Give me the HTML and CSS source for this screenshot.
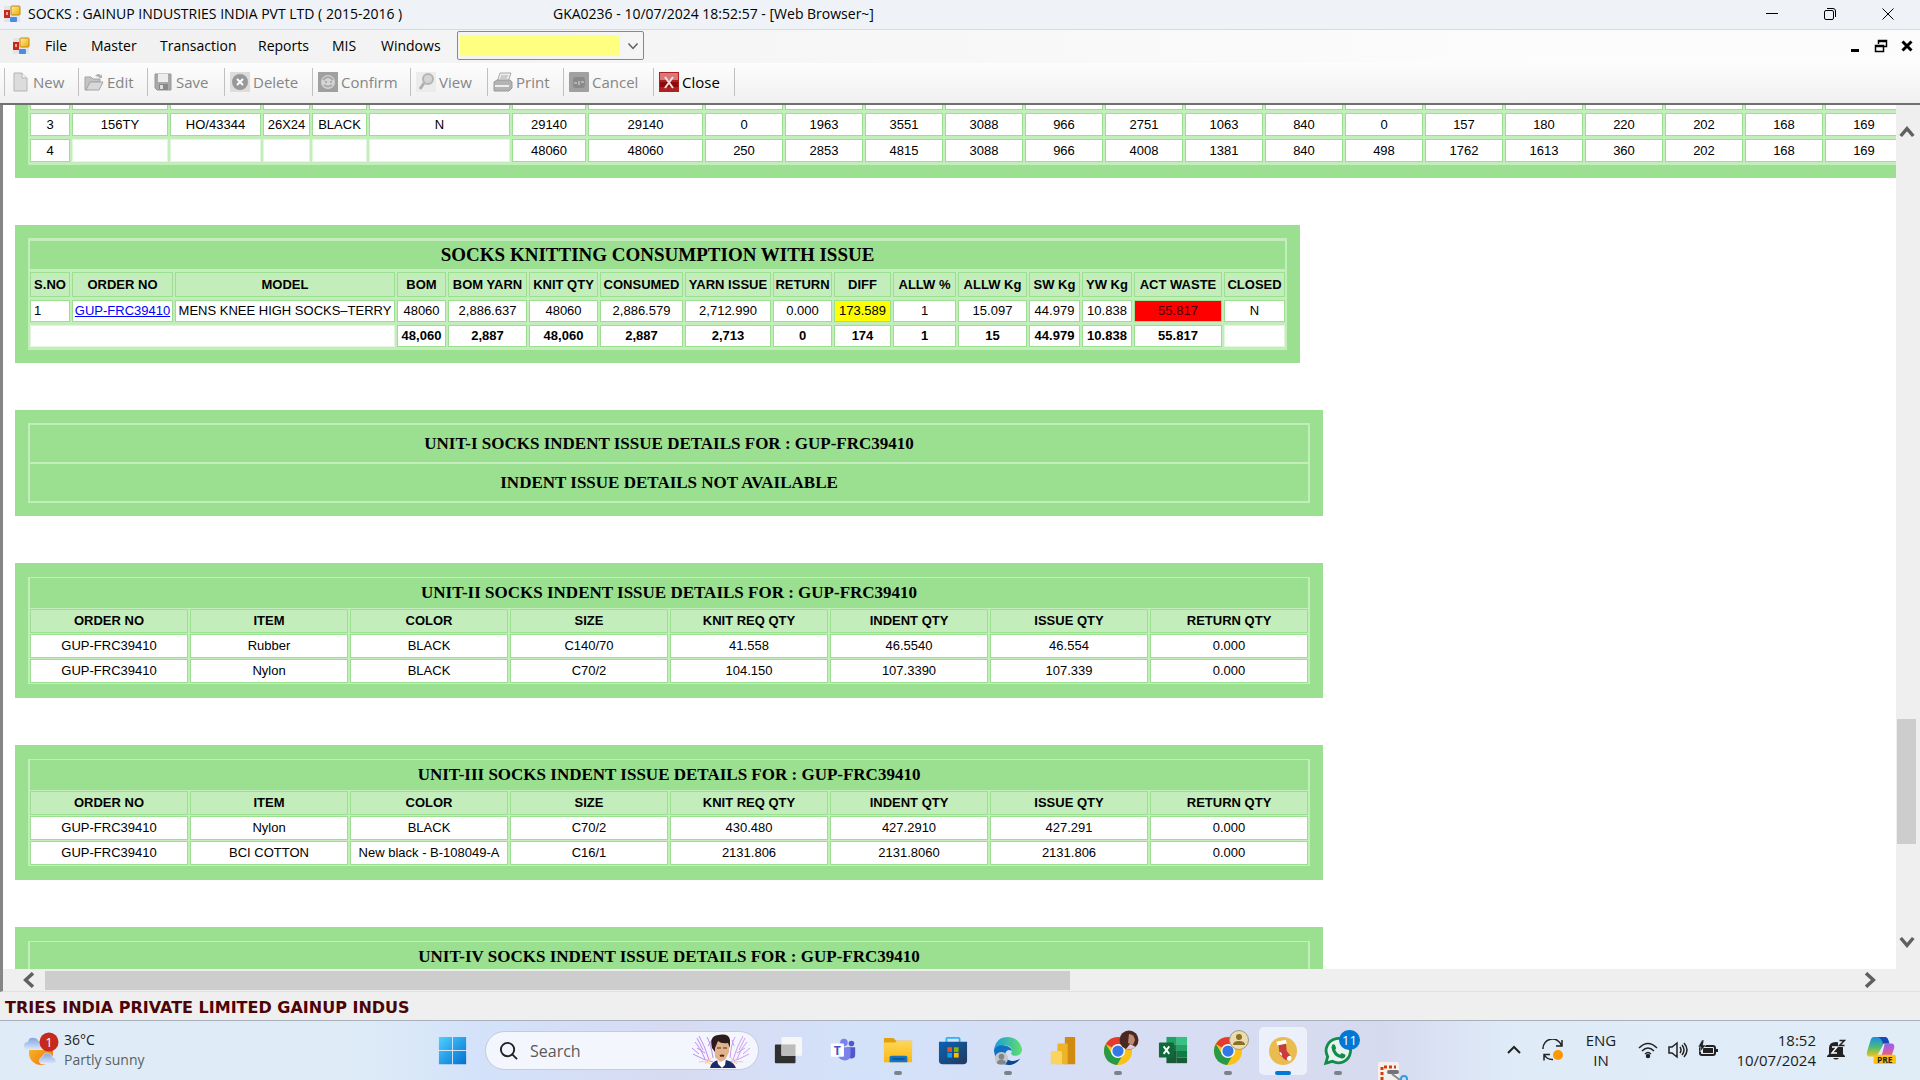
FILE: index.html
```html
<!DOCTYPE html>
<html lang="en">
<head>
<meta charset="utf-8">
<title>SOCKS : GAINUP INDUSTRIES INDIA PVT LTD</title>
<link rel="stylesheet" href="styles.css">
</head>
<body>
<svg class="defs" aria-hidden="true">
  <defs>
    <linearGradient id="gold" x1="0" y1="0" x2="1" y2="1"><stop offset="0" stop-color="#fff0a0"/><stop offset="1" stop-color="#f0a800"/></linearGradient>
    <linearGradient id="win" x1="0" y1="0" x2="1" y2="1"><stop offset="0" stop-color="#4fd0ff"/><stop offset="1" stop-color="#0070d0"/></linearGradient>
    <linearGradient id="folder" x1="0" y1="0" x2="0" y2="1"><stop offset="0" stop-color="#ffd65a"/><stop offset="1" stop-color="#f9b80e"/></linearGradient>
    <linearGradient id="store" x1="0" y1="0" x2="1" y2="1"><stop offset="0" stop-color="#0a62b4"/><stop offset="1" stop-color="#233a5c"/></linearGradient>
    <linearGradient id="edgeTop" x1="0" y1="0" x2="1" y2="0"><stop offset="0" stop-color="#1a9be0"/><stop offset="1" stop-color="#5fe06a"/></linearGradient>
    <linearGradient id="sun" x1="0" y1="0" x2="1" y2="1"><stop offset="0" stop-color="#f8c22c"/><stop offset="1" stop-color="#f07010"/></linearGradient>
    <linearGradient id="cloud" x1="0" y1="0" x2="0" y2="1"><stop offset="0" stop-color="#7fa4e0"/><stop offset="1" stop-color="#dfe9fb"/></linearGradient>
    <linearGradient id="pilotA" x1="0" y1="0" x2="0" y2="1"><stop offset="0" stop-color="#1a8ce8"/><stop offset=".5" stop-color="#4ab880"/><stop offset="1" stop-color="#f2c810"/></linearGradient>
    <linearGradient id="pilotB" x1="0" y1="0" x2="0" y2="1"><stop offset="0" stop-color="#9a5cf0"/><stop offset="1" stop-color="#f0607c"/></linearGradient>
    <symbol id="app" viewBox="0 0 18 18">
      <rect x="1" y="1" width="16" height="16" fill="#e2e4e8"/>
      <rect x="1" y="5" width="6" height="8" fill="#c8281c"/><rect x="3" y="7" width="2" height="3" fill="#f4a090"/>
      <rect x="8" y="1" width="9" height="9" rx="1" fill="url(#gold)" stroke="#c08a10"/>
      <rect x="7" y="12" width="7" height="5" rx="1" fill="#4c8ae8"/>
    </symbol>
    <symbol id="chrome" viewBox="0 0 32 32">
      <circle cx="16" cy="16" r="15" fill="#fbc116"/>
      <path d="M16 16 3 8.500A15 15 0 0 1 29 8.500L16 9z" fill="#e33b2e"/>
      <path d="M3 8.500A15 15 0 0 0 15 31L21.500 19.500 10 20z" fill="#27994a"/>
      <circle cx="16" cy="16" r="7.500" fill="#fff"/><circle cx="16" cy="16" r="6" fill="#3577e5"/>
    </symbol>
    <symbol id="v-up" viewBox="0 0 14 14"><path d="M1.500 10.500 7 4l5.500 6.500" fill="none" stroke="#606060" stroke-width="3"/></symbol>
  </defs>
</svg>

<header class="titlebar">
  <svg class="app-icon"><use href="#app"/></svg>
  <span class="title-app">SOCKS : GAINUP INDUSTRIES INDIA PVT LTD ( 2015-2016 )</span>
  <span class="title-doc">GKA0236 - 10/07/2024 18:52:57 - [Web Browser~]</span>
  <div class="win-controls">
    <button aria-label="Minimize"><svg viewBox="0 0 14 14"><path d="M1 6.500h12"/></svg></button>
    <button aria-label="Restore"><svg viewBox="0 0 14 14"><rect x="1.500" y="3.500" width="9" height="9" rx="1.500"/><path d="M4 1.500h6q2.500 0 2.500 2.500v6"/></svg></button>
    <button aria-label="Close"><svg viewBox="0 0 14 14"><path d="M1.500 1.500l11 11M12.500 1.500l-11 11"/></svg></button>
  </div>
</header>

<nav class="menubar">
  <svg class="app-icon"><use href="#app"/></svg>
  <button class="m-file">File</button>
  <button class="m-master">Master</button>
  <button class="m-trans">Transaction</button>
  <button class="m-reports">Reports</button>
  <button class="m-mis">MIS</button>
  <button class="m-windows">Windows</button>
  <div class="combo">
    <select aria-label="Go to form"><option></option></select>
    <svg class="combo-arrow" viewBox="0 0 12 8"><path d="M1.500 1.500 6 6.500l4.500-5" fill="none" stroke="#606060" stroke-width="1.500"/></svg>
  </div>
  <div class="mdi-controls">
    <button aria-label="Minimize form"><svg viewBox="0 0 14 14"><path d="M3 11.500h8" stroke="#000" stroke-width="3"/></svg></button>
    <button aria-label="Restore form"><svg viewBox="0 0 14 14" fill="none" stroke="#000"><path d="M4.500 5V1.500h8v6H10M4 2.500h9M1.500 6.500h8v6h-8zM1 7.500h9" stroke-width="1.500"/></svg></button>
    <button aria-label="Close form"><svg viewBox="0 0 14 14"><path d="M2.500 2.500l9 9M11.500 2.500l-9 9" stroke="#000" stroke-width="3"/></svg></button>
  </div>
</nav>

<div class="toolbar">
  <button class="t-new" disabled><svg viewBox="0 0 20 20"><path d="M4 1h8l5 5v13H4z" fill="#dcdcdc" stroke="#b4b4b4"/><path d="M12 1v5h5" fill="#f4f4f4" stroke="#b4b4b4"/></svg>New</button>
  <button class="t-edit" disabled><svg viewBox="0 0 20 20"><path d="M1 5h6l2 2h7v3H6l-3 8H1z" fill="#c4c4c4" stroke="#a4a4a4"/><path d="M6 10h13l-4 8H2z" fill="#d8d8d8" stroke="#a4a4a4"/><path d="M11 4q4-4 6 0l1-2v4h-4l2-1" fill="#aaa"/></svg>Edit</button>
  <button class="t-save" disabled><svg viewBox="0 0 20 20"><path d="M2 2h16v16H4l-2-2z" fill="#a8a8a8" stroke="#989898"/><rect x="5" y="2" width="10" height="8" fill="#ececec"/><rect x="6" y="12" width="9" height="6" fill="#888"/><rect x="7" y="13" width="3" height="4" fill="#ddd"/></svg>Save</button>
  <button class="t-delete" disabled><svg viewBox="0 0 20 20"><rect width="20" height="20" fill="#dcdcdc"/><circle cx="10" cy="10" r="8" fill="#989898"/><path d="M7 7l6 6M13 7l-6 6" stroke="#fff" stroke-width="2"/></svg>Delete</button>
  <button class="t-confirm" disabled><svg viewBox="0 0 20 20"><rect width="20" height="20" fill="#a0a0a0"/><circle cx="10" cy="10" r="7" fill="#d4d4d4"/><path d="M5 8q5-6 10 0M6 13q4 3 8 0M7 10h2M12 10h2" fill="none" stroke="#aaa" stroke-width="2"/></svg>Confirm</button>
  <button class="t-view" disabled><svg viewBox="0 0 20 20"><rect width="20" height="20" fill="#ececec"/><circle cx="12" cy="7" r="5" fill="#d4d4d4" stroke="#b4b4b4" stroke-width="2"/><path d="M8 11l-4 6" stroke="#b0b0b0" stroke-width="3"/></svg>View</button>
  <button class="t-print" disabled><svg viewBox="0 0 20 20"><path d="M7 1h11l-3 9H4z" fill="#eee" stroke="#aaa"/><path d="M8 4h7M7 6h7" stroke="#aaa"/><path d="M1 10l3-2h13l2 2v6l-3 3H1z" fill="#b4b4b4" stroke="#999"/><path d="M2 14h14" stroke="#eee" stroke-width="2"/></svg>Print</button>
  <button class="t-cancel" disabled><svg viewBox="0 0 20 20"><rect width="20" height="20" rx="1" fill="#a0a0a0"/><rect x="4" y="5" width="12" height="11" rx="3" fill="#8a8a8a"/><path d="M5 11h3M10 9v4M12 10h3" stroke="#ddd"/></svg>Cancel</button>
  <button class="t-close"><svg viewBox="0 0 20 20"><rect width="20" height="20" fill="#b02020"/><rect x="1" y="1" width="18" height="7" fill="#d87878"/><rect x="1" y="10" width="18" height="5" fill="#8c0c0c"/><path d="M6 5l8 11M14 5l-8 11" stroke="#f0e4e4" stroke-width="2"/></svg>Close</button>
</div>

<main class="browser">
  <div class="page">
    <section class="block">
      <table class="grid">
        <colgroup><col class="w40"><col class="w96"><col class="w91"><col class="w47"><col class="w55"><col class="w141"><col class="w74"><col class="w115"><col class="w78" span="15"></colgroup>
        <tbody>
          <tr><td></td><td></td><td></td><td></td><td></td><td></td><td></td><td></td><td></td><td></td><td></td><td></td><td></td><td></td><td></td><td></td><td></td><td></td><td></td><td></td><td></td><td></td><td></td></tr>
          <tr><td>3</td><td>156TY</td><td>HO/43344</td><td>26X24</td><td>BLACK</td><td>N</td><td>29140</td><td>29140</td><td>0</td><td>1963</td><td>3551</td><td>3088</td><td>966</td><td>2751</td><td>1063</td><td>840</td><td>0</td><td>157</td><td>180</td><td>220</td><td>202</td><td>168</td><td>169</td></tr>
          <tr><td>4</td><td class="void"></td><td class="void"></td><td class="void"></td><td class="void"></td><td class="void"></td><td>48060</td><td>48060</td><td>250</td><td>2853</td><td>4815</td><td>3088</td><td>966</td><td>4008</td><td>1381</td><td>840</td><td>498</td><td>1762</td><td>1613</td><td>360</td><td>202</td><td>168</td><td>169</td></tr>
        </tbody>
      </table>
    </section>

    <section class="block">
      <table class="grid consumption">
        <colgroup><col class="w40"><col class="w101"><col class="w220"><col class="w49"><col class="w79"><col class="w69"><col class="w83"><col class="w86"><col class="w59"><col class="w57"><col class="w63"><col class="w69"><col class="w51"><col class="w50"><col class="w88"><col class="w61"></colgroup>
        <thead>
          <tr><th class="title title-wide" colspan="16">SOCKS KNITTING CONSUMPTION WITH ISSUE</th></tr>
          <tr class="head"><th>S.NO</th><th>ORDER NO</th><th>MODEL</th><th>BOM</th><th>BOM YARN</th><th>KNIT QTY</th><th>CONSUMED</th><th>YARN ISSUE</th><th>RETURN</th><th>DIFF</th><th>ALLW %</th><th>ALLW Kg</th><th>SW Kg</th><th>YW Kg</th><th>ACT WASTE</th><th>CLOSED</th></tr>
        </thead>
        <tbody>
          <tr><td class="left">1</td><td><a href="#order">GUP-FRC39410</a></td><td>MENS KNEE HIGH SOCKS–TERRY</td><td>48060</td><td>2,886.637</td><td>48060</td><td>2,886.579</td><td>2,712.990</td><td>0.000</td><td class="warn">173.589</td><td>1</td><td>15.097</td><td>44.979</td><td>10.838</td><td class="alert">55.817</td><td>N</td></tr>
        </tbody>
        <tfoot>
          <tr><td class="void" colspan="3"></td><td>48,060</td><td>2,887</td><td>48,060</td><td>2,887</td><td>2,713</td><td>0</td><td>174</td><td>1</td><td>15</td><td>44.979</td><td>10.838</td><td>55.817</td><td class="void"></td></tr>
        </tfoot>
      </table>
    </section>

    <section class="block">
      <table class="grid notice">
        <colgroup><col class="w158" span="8"></colgroup>
        <tbody>
          <tr><th class="title" colspan="8">UNIT-I SOCKS INDENT ISSUE DETAILS FOR : GUP-FRC39410</th></tr>
          <tr><th class="title" colspan="8">INDENT ISSUE DETAILS NOT AVAILABLE</th></tr>
        </tbody>
      </table>
    </section>

    <section class="block thin">
      <table class="grid indent">
        <colgroup><col class="w158" span="8"></colgroup>
        <thead>
          <tr><th class="title" colspan="8">UNIT-II SOCKS INDENT ISSUE DETAILS FOR : GUP-FRC39410</th></tr>
          <tr class="head"><th>ORDER NO</th><th>ITEM</th><th>COLOR</th><th>SIZE</th><th>KNIT REQ QTY</th><th>INDENT QTY</th><th>ISSUE QTY</th><th>RETURN QTY</th></tr>
        </thead>
        <tbody>
          <tr><td>GUP-FRC39410</td><td>Rubber</td><td>BLACK</td><td>C140/70</td><td>41.558</td><td>46.5540</td><td>46.554</td><td>0.000</td></tr>
          <tr><td>GUP-FRC39410</td><td>Nylon</td><td>BLACK</td><td>C70/2</td><td>104.150</td><td>107.3390</td><td>107.339</td><td>0.000</td></tr>
        </tbody>
      </table>
    </section>

    <section class="block thin">
      <table class="grid indent">
        <colgroup><col class="w158" span="8"></colgroup>
        <thead>
          <tr><th class="title" colspan="8">UNIT-III SOCKS INDENT ISSUE DETAILS FOR : GUP-FRC39410</th></tr>
          <tr class="head"><th>ORDER NO</th><th>ITEM</th><th>COLOR</th><th>SIZE</th><th>KNIT REQ QTY</th><th>INDENT QTY</th><th>ISSUE QTY</th><th>RETURN QTY</th></tr>
        </thead>
        <tbody>
          <tr><td>GUP-FRC39410</td><td>Nylon</td><td>BLACK</td><td>C70/2</td><td>430.480</td><td>427.2910</td><td>427.291</td><td>0.000</td></tr>
          <tr><td>GUP-FRC39410</td><td>BCI COTTON</td><td>New black - B-108049-A</td><td>C16/1</td><td>2131.806</td><td>2131.8060</td><td>2131.806</td><td>0.000</td></tr>
        </tbody>
      </table>
    </section>

    <section class="block thin">
      <table class="grid indent">
        <colgroup><col class="w158" span="8"></colgroup>
        <thead>
          <tr><th class="title" colspan="8">UNIT-IV SOCKS INDENT ISSUE DETAILS FOR : GUP-FRC39410</th></tr>
        </thead>
      </table>
    </section>
  </div>

  <div class="vscroll">
    <button aria-label="Scroll up"><svg viewBox="0 0 14 14"><use href="#v-up"/></svg></button>
    <div class="vtrack"><div class="vthumb"></div></div>
    <button aria-label="Scroll down"><svg viewBox="0 0 14 14"><path d="M1.500 3.500 7 10l5.500-6.500" fill="none" stroke="#606060" stroke-width="3"/></svg></button>
  </div>
  <div class="hscroll">
    <button aria-label="Scroll left"><svg viewBox="0 0 14 14"><path d="M10.500 1 4 7l6.500 6" fill="none" stroke="#606060" stroke-width="3"/></svg></button>
    <div class="htrack"><div class="hthumb"></div></div>
    <button aria-label="Scroll right"><svg viewBox="0 0 14 14"><path d="M3.500 1 10 7l-6.500 6" fill="none" stroke="#606060" stroke-width="3"/></svg></button>
  </div>
</main>

<div class="statusbar">TRIES INDIA PRIVATE LIMITED GAINUP INDUS</div>

<footer class="taskbar">
  <button class="weather">
    <svg viewBox="0 0 36 36"><circle cx="17" cy="21" r="12" fill="url(#sun)"/><path d="M4 18a4 4 0 0 1 0-8q1-5 6-4 4 0 5 5 4 1 4 7z" fill="url(#cloud)"/><path d="M17 32a4 4 0 0 1 1-7q2-5 6-4 4 1 4 4 4 1 4 4 0 3-3 3z" fill="url(#cloud)" stroke="#e8f0fc" stroke-width=".5"/><circle cx="25" cy="10" r="9.500" fill="#c42b1c"/><text x="25" y="15" text-anchor="middle" class="badge-text">1</text></svg>
    <span class="weather-text"><span class="temp">36°C</span><span class="cond">Partly sunny</span></span>
  </button>

  <div class="apps">
    <button class="app" aria-label="Start"><svg viewBox="0 0 32 32"><path d="M1 1h14v14H1zM16 1h14v14H16zM1 16h14v14H1zM16 16h14v14H16z" fill="url(#win)"/></svg></button>
    <label class="search">
      <svg class="lens" viewBox="0 0 20 20"><circle cx="9" cy="9" r="7" fill="none" stroke="#222" stroke-width="2"/><path d="M14 14l5 5" stroke="#222" stroke-width="2"/></svg>
      <input type="text" placeholder="Search" aria-label="Search">
      <svg class="portrait" viewBox="0 0 60 34"><g fill="none" stroke-width="1"><path stroke="#c08cf0" d="M22 28Q12 26 2 20M14 25Q10 14 4 8M18 26Q14 12 8 2M22 24Q20 10 16 3M8 20L1 14M12 16L6 4M17 12l4-6M14 19l-8-5"/><path stroke="#d29cf0" d="M38 28Q48 26 58 20M46 25Q50 14 56 8M42 26Q46 12 52 2M39 24Q40 10 44 3M52 20l7-6M48 16l6-12M43 12l-2-6M46 19l8-5"/><path stroke="#ffc88a" d="M8 28q8-2 14 4M52 28q-8-2-14 4M14 30l6-6M46 30l-6-6"/></g><path d="M19 34q1-6 8-8h8q8 2 10 8z" fill="#1c2a6c"/><path d="M26 25h9l-1 6-3 3-4-4z" fill="#fff"/><path d="M23 8q6-5 15 0v10l-4 8-5 2-5-5z" fill="#e2b48c"/><path d="M21 14Q18 2 27 1q11-2 12 5v8l-2-5q-7 1-10-2l-3 7v4z" fill="#2c1c1c"/><path d="M29 22q2-1 4 0" stroke="#5a2018" stroke-width="2" fill="none"/><path d="M26 14h4M32 14h4" stroke="#4a2c20"/></svg>
    </label>
    <button class="app" aria-label="Task view"><svg viewBox="0 0 32 32"><rect x="2" y="9" width="22" height="20" rx="1" fill="#303030"/><rect x="9" y="1" width="22" height="20" rx="1" fill="#f6f6f6"/><rect x="9" y="9" width="15" height="12" fill="#bcbcbc"/></svg></button>
    <button class="app" aria-label="Teams"><svg viewBox="0 0 32 32"><circle cx="17" cy="7" r="4" fill="#7b83eb"/><circle cx="25" cy="8" r="3" fill="#5059c9"/><path d="M20 12h9v8q0 4-4 4t-5-4z" fill="#5059c9"/><path d="M10 12h14v8q0 6-6 6t-8-6z" fill="#7b83eb"/><rect x="3" y="8" width="14" height="14" rx="1" fill="#fff"/><text x="10" y="20" text-anchor="middle" class="glyph-t">T</text></svg></button>
    <button class="app open" aria-label="File Explorer"><svg viewBox="0 0 32 32"><path d="M1 3q0-1 1-1h9l3 3h17v9H1z" fill="#e2a00c"/><path d="M1 7h12l2-2h16v23H1z" fill="url(#folder)"/><path d="M7 28v-5q0-2 2-2h15q2 0 2 2v5z" fill="#1473c4"/><path d="M10 24.500h13" stroke="#0b4f8c" stroke-width="1.500"/></svg></button>
    <button class="app" aria-label="Microsoft Store"><svg viewBox="0 0 32 32"><path d="M9 8V3q0-1 1-1h12q1 0 1 1v5" fill="none" stroke="#2cb4f4" stroke-width="2"/><path d="M1 6h30v20q0 4-4 4H5q-4 0-4-4z" fill="url(#store)"/><path d="M10 12h5v5h-5z" fill="#f25022"/><path d="M17 12h5v5h-5z" fill="#7fba00"/><path d="M10 18h5v5h-5z" fill="#00a4ef"/><path d="M17 18h5v5h-5z" fill="#ffb900"/></svg></button>
    <button class="app open" aria-label="Edge"><svg viewBox="0 0 32 32"><path d="M1 15Q3 1 16 1q13 1 15 14-1 7-9 6-4-1-2-4 1-6-6-7-9 0-13 5z" fill="url(#edgeTop)"/><path d="M1 15q3-6 11-5 8 1 8 6-5-3-7 3 0 7 8 8 5 0 8-3-5 7-13 7Q2 30 1 15z" fill="#1170c4"/><path d="M12 17q-2 8 8 10 5 0 9-3-5 7-13 7-8-6-4-14z" fill="#0c468c"/><circle cx="9" cy="24" r="7" fill="#c4c8cc"/><circle cx="9" cy="22" r="3" fill="#80868c"/><path d="M4 29q1-4 5-4t5 4q-5 3-10 0z" fill="#80868c"/></svg></button>
    <button class="app" aria-label="Power BI"><svg viewBox="0 0 32 32"><path d="M18 1h10q1 0 1 1v28H18z" fill="#d08a10"/><path d="M10 9q0-1 1-1h9q1 0 1 1v21H10z" fill="#eeb428"/><path d="M3 17q0-1 1-1h9q2 0 2 2v12H3z" fill="#fad45c"/></svg></button>
    <button class="app open" aria-label="Chrome"><svg viewBox="0 0 32 32"><use href="#chrome"/></svg><svg class="corner" viewBox="0 0 20 20"><circle cx="10" cy="10" r="9.500" fill="#4a2820"/><path d="M10 4q5 0 6 6l-2 5-5-2z" fill="#c08870"/><path d="M7 19l4-5 6 3q-4 3-10 2z" fill="#e0c8d4"/></svg></button>
    <button class="app" aria-label="Excel"><svg viewBox="0 0 32 32"><path d="M9 1h11v8H9z" fill="#21a366"/><path d="M20 1h11v8H20z" fill="#33c481"/><path d="M9 9h11v7H9z" fill="#107c41"/><path d="M20 9h11v7H20z" fill="#21a366"/><path d="M9 16h11v13H9z" fill="#185c37"/><path d="M20 16h11v7H20z" fill="#107c41"/><path d="M20 23h11v6H20z" fill="#185c37"/><rect x="1" y="7" width="16" height="16" rx="1" fill="#0e6b38"/><path d="M6 11l6 8M12 11l-6 8" stroke="#fff" stroke-width="2"/></svg></button>
    <button class="app open" aria-label="Chrome, second profile"><svg viewBox="0 0 32 32"><use href="#chrome"/></svg><svg class="corner" viewBox="0 0 20 20"><circle cx="10" cy="10" r="9.500" fill="#e8dcb0" stroke="#a09880"/><circle cx="10" cy="7" r="3" fill="#8a7020"/><path d="M4 15q0-4 6-4t6 4z" fill="#8a7020"/></svg></button>
    <button class="app open active" aria-label="Socks"><svg viewBox="0 0 32 32"><circle cx="16" cy="16" r="15" fill="#eabc50"/><path d="M11 8l8-2 1 10 4 5q1 4-3 5-3 0-6-4-4-2-3-6z" fill="#c83c3c"/><path d="M9 6l10-2 1 4-10 2z" fill="#fff"/><path d="M20 25q0-4 4-4 2 3 0 5-2 1-4-1z" fill="#fff"/><path d="M12 17q3 0 3 4-3-1-3-4z" fill="#fff"/></svg></button>
    <button class="app open" aria-label="WhatsApp"><svg viewBox="0 0 32 32"><path d="M3 29l2-7A13 13 0 1 1 10 27z" fill="#e8f2ee" stroke="#128c4a" stroke-width="3"/><path d="M10 9q2-1 3 1l1 3-1 2q2 4 5 5l2-2 4 2q0 4-4 4Q10 22 9 12z" fill="#128c4a"/></svg><span class="count">11</span></button>
    <button class="snip" aria-label="Snipping Tool"><svg viewBox="0 0 32 18"><rect x="1" y="0" width="21" height="20" rx="2" fill="#f4f0ee"/><path d="M5 18V5h14" fill="none" stroke="#d83b01" stroke-width="3" stroke-dasharray="3 2"/><rect x="10" y="8" width="12" height="4" rx="2" fill="#70747c"/><path d="M15 12l8 6" stroke="#888" stroke-width="2"/><circle cx="27" cy="17" r="3" fill="none" stroke="#2ca0e0" stroke-width="2"/></svg></button>
  </div>

  <div class="tray">
    <button class="t-chevron" aria-label="Show hidden icons"><svg viewBox="0 0 20 20"><path d="M4 13l6-6 6 6" fill="none" stroke="#222" stroke-width="2"/></svg></button>
    <button class="t-sync" aria-label="Updates"><svg viewBox="0 0 22 22" fill="none" stroke="#222" stroke-width="1.500"><path d="M1 10A9.500 9.500 0 0 1 19.500 6.500M20 1v6h-6M11 20.500A9.500 9.500 0 0 1 2 15.500M2 21.500v-6h6"/><circle cx="16" cy="16" r="5" fill="#ff9800" stroke="none"/></svg></button>
    <button class="lang"><span>ENG</span><span>IN</span></button>
    <button class="status-icons" aria-label="Network, sound and battery">
      <svg viewBox="0 0 20 20" fill="none" stroke="#222" stroke-width="1.500"><path d="M1 8q9-9 18 0M4 11q6-6 12 0M7 14q3-3 6 0"/><circle cx="10" cy="16" r="1.500" fill="#222"/></svg>
      <svg viewBox="0 0 20 20" fill="none" stroke="#222" stroke-width="1.500"><path d="M1 7h3l5-4v14l-5-4H1zM12 7q2 3 0 6M14 5q4 5 0 10M16 3q6 7 0 14"/></svg>
      <svg viewBox="0 0 20 20"><rect x="2" y="6" width="15" height="9" rx="2" fill="none" stroke="#222" stroke-width="2"/><rect x="5" y="8" width="10" height="5" fill="#222"/><path d="M18 9h2v3h-2z" fill="#222"/><path d="M4 0L0 7h3L2 12l6-7H5l1-5z" fill="#222" stroke="#e0ecf7" stroke-width=".5"/></svg>
    </button>
    <button class="clock"><span>18:52</span><span>10/07/2024</span></button>
    <button class="bell" aria-label="Notifications"><svg viewBox="0 0 20 22"><path d="M3 9q0-6 7-6t7 6v6l2 2v1H1v-1l2-2zM7 19h6q-3 3-6 0z" fill="#222"/><path d="M6 8h5l-5 6h5" fill="none" stroke="#fff" stroke-width="1.500"/><path d="M12 0h8v8h-8z" fill="#e0ecf7"/><path d="M13.500 1.500h5l-5 5h5" fill="none" stroke="#222" stroke-width="1.500"/></svg></button>
    <button class="copilot" aria-label="Copilot"><svg viewBox="0 0 32 32"><path d="M8 2h12q3 0 4 4l1 3h-6l-6 11q-1 3-4 3H4q-4 0-3-5L5 5q1-3 3-3z" fill="url(#pilotA)"/><path d="M12 2h8q3 0 4 4l1 3h-7q-2-7-6-7z" fill="#1648b8"/><path d="M20 9h7q4 0 3 5l-3 9H14q3 0 4-6z" fill="url(#pilotB)"/><rect x="8" y="21" width="24" height="10" rx="2" fill="#ffc20e"/><text x="20" y="30" text-anchor="middle" class="pre-text">PRE</text></svg></button>
  </div>
</footer>
</body>
</html>
```
FILE: styles.css
```css
* { box-sizing: border-box; }
body {
  margin: 0;
  height: 100vh;
  display: flex;
  flex-direction: column;
  overflow: hidden;
  background: #fff;
  color: #000;
  font-family: "Open Sans", "Noto Sans", sans-serif;
  font-size: 14px;
}
button { border: 0; padding: 0; margin: 0; background: none; font: inherit; color: inherit; display: flex; align-items: center; white-space: nowrap; }
svg { display: block; flex: none; }
.defs { position: absolute; width: 0; height: 0; }

.titlebar { height: 30px; flex: none; display: flex; align-items: center; padding: 0 3px 2px; background: #eff3f7; border-bottom: 1px solid #d8dbde; }
.app-icon { width: 18px; height: 18px; }
.title-app { width: 525px; margin-left: 7px; white-space: nowrap; }
.win-controls { margin-left: auto; display: flex; }
.win-controls button { width: 58px; height: 27px; justify-content: center; }
.win-controls svg { width: 14px; height: 14px; fill: none; stroke: #000; stroke-width: 1; }

.menubar { height: 33px; flex: none; display: flex; align-items: center; padding: 0 0 2px 12px; background: linear-gradient(90deg, #f0f0f0, #fcfcfc 80%); }
.menubar > button { height: 31px; flex: none; }
.m-file { width: 46px; margin-left: 15px; }
.m-master { width: 69px; }
.m-trans { width: 98px; }
.m-reports { width: 74px; }
.m-mis { width: 49px; }
.m-windows { width: 76px; }
.combo { position: relative; width: 187px; height: 29px; }
.combo select { appearance: none; width: 100%; height: 100%; padding: 3px 23px 3px 2px; border: 1px solid #888; border-radius: 2px; background: linear-gradient(#ffff80, #ffff80) content-box no-repeat #fff; font: inherit; }
.combo-arrow { position: absolute; right: 5px; top: 11px; width: 12px; height: 8px; pointer-events: none; }
.mdi-controls { margin-left: auto; display: flex; gap: 12px; padding-right: 6px; }
.mdi-controls svg { width: 14px; height: 14px; }

.toolbar { height: 42px; flex: none; display: flex; align-items: center; padding: 0 0 3px 4px; background: linear-gradient(#fdfdfd, #f0f0f0); border-bottom: 2px solid #707070; font-size: 15px; }
.toolbar button { height: 28px; gap: 3px; padding-left: 5px; border-left: 1px solid #c0c0c0; flex: none; }
.toolbar button:disabled { color: #858585; }
.toolbar svg { width: 20px; height: 20px; }
.t-new { width: 74px; }
.t-edit { width: 69px; }
.t-save { width: 77px; }
.t-delete { width: 88px; }
.t-confirm { width: 98px; }
.t-view { width: 77px; }
.t-print { width: 76px; }
.t-cancel { width: 90px; }
.toolbar .t-close { width: 82px; border-right: 1px solid #c0c0c0; }

.browser { flex: 1; min-height: 0; display: grid; grid-template: minmax(0, 1fr) 22px / minmax(0, 1fr) 24px; border-left: 3px solid #858585; background: #efefef; border-bottom: 1px solid #e0e0e0; }
.page { overflow: hidden; background: #fff; padding-left: 12px; display: flex; flex-direction: column; gap: 47px; align-items: flex-start; }
.block { flex: none; background: #9bdf90; padding: 13px; }
.block:first-child { margin-top: -34px; }
.block.thin { padding: 14px 13px; }
.grid { width: min-content; table-layout: fixed; border-collapse: separate; border-spacing: 2px 3px; background: #c4edbc; font-family: "Liberation Sans", Arial, sans-serif; font-size: 13px; line-height: 16px; }
.grid td, .grid th { height: 23px; padding: 0; text-align: center; white-space: nowrap; }
.grid td { background: #fff; border: 1px solid #9bdf90; }
.grid td.void { border-color: #e2f6de; }
.grid td.left { text-align: left; padding-left: 3px; }
.grid td.warn { background: #ff0; }
.grid td.alert { background: #f00; color: #4a0000; }
.grid a { color: #00f; }
.grid .head th { height: 25px; border: 1px solid #9bdf90; }
.grid th.title { height: 28px; background: #9bdf90; font-family: "Liberation Serif", "Times New Roman", serif; font-size: 17px; line-height: 24px; }
.grid th.title-wide { font-size: 19px; }
.consumption td { height: 22px; }
.consumption tfoot td { font-weight: bold; }
.notice { border-spacing: 2px; }
.grid.notice th.title { height: 37px; }
.indent { border-spacing: 2px 1px; }
.grid.indent th.title { height: 30px; }
.grid.indent .head th, .indent td { height: 24px; }
.w40 { width: 40px; } .w47 { width: 47px; } .w49 { width: 49px; } .w50 { width: 50px; } .w51 { width: 51px; }
.w55 { width: 55px; } .w57 { width: 57px; } .w59 { width: 59px; } .w61 { width: 61px; } .w63 { width: 63px; }
.w69 { width: 69px; } .w74 { width: 74px; } .w78 { width: 78px; } .w79 { width: 79px; } .w83 { width: 83px; }
.w86 { width: 86px; } .w88 { width: 88px; } .w91 { width: 91px; } .w96 { width: 96px; } .w101 { width: 101px; }
.w115 { width: 115px; } .w141 { width: 141px; } .w158 { width: 158px; } .w220 { width: 220px; }

.vscroll { display: flex; flex-direction: column; align-items: center; padding: 16px 4px 16px 1px; }
.vscroll svg, .hscroll svg { width: 16px; height: 16px; }
.vscroll button { height: 22px; }
.vtrack { flex: 1; width: 100%; display: flex; flex-direction: column; }
.vtrack::before { content: ""; flex: 576 0 0; }
.vtrack::after { content: ""; flex: 87 0 0; }
.vthumb { flex: 125 0 0; background: #cdcdcd; }
.hscroll { display: flex; align-items: center; padding: 1px 18px; }
.hscroll button { height: 20px; }
.htrack { flex: 1; height: 19px; margin: 0 8px; display: flex; }
.htrack::after { content: ""; flex: 783 0 0; }
.hthumb { flex: 1023 0 0; background: #cdcdcd; }

.statusbar { height: 29px; flex: none; padding-left: 5px; line-height: 32px; background: #efefef; border-bottom: 1px solid #a8b0bc; font-family: "DejaVu Sans", Verdana, sans-serif; font-weight: bold; font-size: 16px; color: #4c0404; white-space: nowrap; overflow: hidden; }

.taskbar { height: 59px; flex: none; display: grid; grid-template-columns: 425px 1fr auto; align-items: stretch; background: linear-gradient(90deg, #dfecf7 0, #dfecf7 18%, #d3e2fa 25%, #d7dbf2 35%, #d3e2fa 45%, #d7def4 58%, #d6daef 72%, #dfecf8 79%, #e0edf7); color: #1c1c1c; }
.weather { gap: 4px; padding: 0 0 2px 24px; align-self: center; text-align: left; }
.weather svg { width: 36px; height: 36px; }
.weather-text, .lang, .clock { display: flex; flex-direction: column; line-height: 20px; }
.cond { color: #5a5f66; }
.badge-text { font-size: 13px; fill: #fff; }
.apps { display: flex; align-items: center; min-width: 0; }
.app { position: relative; width: 48px; height: 48px; margin-right: 7px; justify-content: center; border-radius: 5px; flex: none; }
.app svg { width: 30px; height: 30px; }
.app:first-child { margin-right: 8px; margin-left: 4px; }
.app.open::after { content: ""; position: absolute; left: 20px; bottom: 0; width: 8px; height: 4px; border-radius: 2px; background: #7c828c; }
.app.active { background: #ecf0fb; }
.app.active::after { left: 16px; width: 16px; background: #0078d4; }
.app svg.corner { position: absolute; right: 3px; top: 3px; width: 20px; height: 20px; }
.count { position: absolute; right: 2px; top: 3px; width: 21px; height: 20px; border-radius: 10px; background: #0078d4; color: #fff; font-size: 13px; line-height: 20px; text-align: center; }
.glyph-t { font-size: 13px; font-weight: bold; fill: #4b53bc; }
.search { width: 274px; height: 39px; margin-right: 5px; flex: none; display: flex; align-items: center; padding: 0 7px 0 13px; background: #f3f6fd; border: 1px solid #c0cce0; border-radius: 20px; }
.lens { width: 19px; height: 19px; }
.search input { flex: 1; min-width: 0; margin-left: 12px; padding: 0; border: 0; outline: 0; background: none; font: inherit; font-size: 16px; }
.search input::placeholder { color: #5a5a5a; opacity: 1; }
.portrait { width: 60px; height: 34px; }
.snip { align-self: flex-end; margin-left: 8px; }
.snip svg { width: 32px; height: 18px; }

.tray { display: flex; align-items: center; padding: 0 24px 2px 0; font-size: 15px; }
.t-chevron svg { width: 20px; height: 20px; }
.t-sync { margin-left: 18px; }
.t-sync svg { width: 22px; height: 22px; }
.lang { margin-left: 20px; width: 34px; }
.status-icons { gap: 10px; margin-left: 20px; }
.status-icons svg { width: 20px; height: 20px; }
.clock { width: 90px; margin-left: 8px; align-items: flex-end; }
.bell { margin-left: 10px; }
.bell svg { width: 20px; height: 22px; }
.copilot { margin-left: 20px; }
.copilot svg { width: 30px; height: 30px; }
.pre-text { font-size: 9px; font-weight: bold; fill: #222; }
```
